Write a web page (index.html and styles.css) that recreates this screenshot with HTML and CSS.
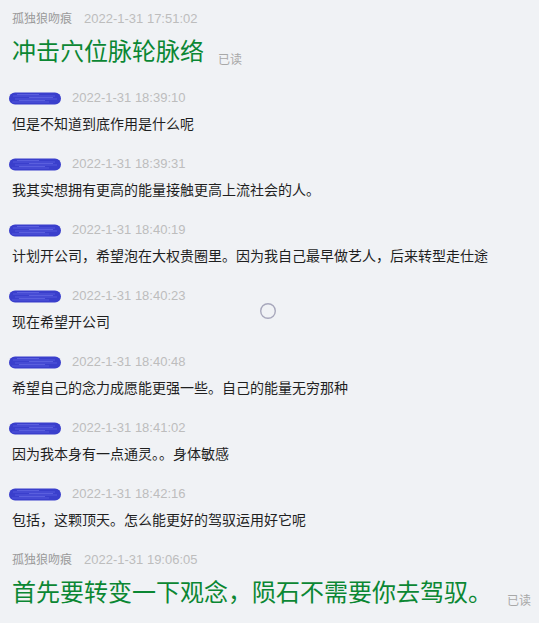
FILE: index.html
```html
<!DOCTYPE html>
<html lang="zh-CN">
<head>
<meta charset="utf-8">
<link rel="stylesheet" href="styles.css">
</head>
<body>
<div class="chat">
  <div class="msg">
    <div class="head"><span class="name">孤独狼吻痕</span><span class="time">2022-1-31 17:51:02</span></div>
    <div class="big-row"><span class="big">冲击穴位脉轮脉络</span><span class="read">已读</span></div>
  </div>

  <div class="msg">
    <div class="head"><svg class="blob" width="52" height="13" viewBox="0 0 52 13"><rect x="0" y="0.5" width="52" height="12" rx="6" fill="#3a3fcc"/><path d="M4 4 H46 M6 7 H48 M3 10 H40" stroke="#5a5fe0" stroke-width="1" opacity="0.8"/><path d="M8 2.5 H30 M20 5.5 H44 M10 8.5 H36" stroke="#7378ec" stroke-width="0.8" opacity="0.7"/></svg><span class="time">2022-1-31 18:39:10</span></div>
    <div class="text">但是不知道到底作用是什么呢</div>
  </div>

  <div class="msg">
    <div class="head"><svg class="blob" width="52" height="13" viewBox="0 0 52 13"><rect x="0" y="0.5" width="52" height="12" rx="6" fill="#3a3fcc"/><path d="M4 4 H46 M6 7 H48 M3 10 H40" stroke="#5a5fe0" stroke-width="1" opacity="0.8"/><path d="M8 2.5 H30 M20 5.5 H44 M10 8.5 H36" stroke="#7378ec" stroke-width="0.8" opacity="0.7"/></svg><span class="time">2022-1-31 18:39:31</span></div>
    <div class="text">我其实想拥有更高的能量接触更高上流社会的人。</div>
  </div>

  <div class="msg">
    <div class="head"><svg class="blob" width="52" height="13" viewBox="0 0 52 13"><rect x="0" y="0.5" width="52" height="12" rx="6" fill="#3a3fcc"/><path d="M4 4 H46 M6 7 H48 M3 10 H40" stroke="#5a5fe0" stroke-width="1" opacity="0.8"/><path d="M8 2.5 H30 M20 5.5 H44 M10 8.5 H36" stroke="#7378ec" stroke-width="0.8" opacity="0.7"/></svg><span class="time">2022-1-31 18:40:19</span></div>
    <div class="text">计划开公司，希望泡在大权贵圈里。因为我自己最早做艺人，后来转型走仕途</div>
  </div>

  <div class="msg">
    <div class="head"><svg class="blob" width="52" height="13" viewBox="0 0 52 13"><rect x="0" y="0.5" width="52" height="12" rx="6" fill="#3a3fcc"/><path d="M4 4 H46 M6 7 H48 M3 10 H40" stroke="#5a5fe0" stroke-width="1" opacity="0.8"/><path d="M8 2.5 H30 M20 5.5 H44 M10 8.5 H36" stroke="#7378ec" stroke-width="0.8" opacity="0.7"/></svg><span class="time">2022-1-31 18:40:23</span></div>
    <div class="text">现在希望开公司</div>
  </div>

  <div class="msg">
    <div class="head"><svg class="blob" width="52" height="13" viewBox="0 0 52 13"><rect x="0" y="0.5" width="52" height="12" rx="6" fill="#3a3fcc"/><path d="M4 4 H46 M6 7 H48 M3 10 H40" stroke="#5a5fe0" stroke-width="1" opacity="0.8"/><path d="M8 2.5 H30 M20 5.5 H44 M10 8.5 H36" stroke="#7378ec" stroke-width="0.8" opacity="0.7"/></svg><span class="time">2022-1-31 18:40:48</span></div>
    <div class="text">希望自己的念力成愿能更强一些。自己的能量无穷那种</div>
  </div>

  <div class="msg">
    <div class="head"><svg class="blob" width="52" height="13" viewBox="0 0 52 13"><rect x="0" y="0.5" width="52" height="12" rx="6" fill="#3a3fcc"/><path d="M4 4 H46 M6 7 H48 M3 10 H40" stroke="#5a5fe0" stroke-width="1" opacity="0.8"/><path d="M8 2.5 H30 M20 5.5 H44 M10 8.5 H36" stroke="#7378ec" stroke-width="0.8" opacity="0.7"/></svg><span class="time">2022-1-31 18:41:02</span></div>
    <div class="text">因为我本身有一点通灵。。身体敏感</div>
  </div>

  <div class="msg">
    <div class="head"><svg class="blob" width="52" height="13" viewBox="0 0 52 13"><rect x="0" y="0.5" width="52" height="12" rx="6" fill="#3a3fcc"/><path d="M4 4 H46 M6 7 H48 M3 10 H40" stroke="#5a5fe0" stroke-width="1" opacity="0.8"/><path d="M8 2.5 H30 M20 5.5 H44 M10 8.5 H36" stroke="#7378ec" stroke-width="0.8" opacity="0.7"/></svg><span class="time">2022-1-31 18:42:16</span></div>
    <div class="text">包括，这颗顶天。怎么能更好的驾驭运用好它呢</div>
  </div>

  <div class="msg">
    <div class="head"><span class="name">孤独狼吻痕</span><span class="time">2022-1-31 19:06:05</span></div>
    <div class="big-row last"><span class="big">首先要转变一下观念，陨石不需要你去驾驭。</span><span class="read">已读</span></div>
  </div>
</div>
<div class="spinner"><svg width="18" height="18" viewBox="0 0 18 18"><circle cx="9" cy="9" r="7.3" fill="none" stroke="#a8a8bc" stroke-width="1.4"/></svg></div>
</body>
</html>
```

FILE: styles.css
```css
html, body {
  margin: 0;
  padding: 0;
  background: #f0f2f5;
  height: 100%;
  overflow: hidden;
}
body {
  font-family: "Liberation Sans", "Noto Sans CJK SC", sans-serif;
}
.chat {
  display: flex;
  flex-direction: column;
  gap: 20px;
  padding: 9px 0 0 12px;
}
.msg {
  display: flex;
  flex-direction: column;
  gap: 6px;
}
.head {
  display: flex;
  align-items: center;
  height: 20px;
  gap: 12px;
}
.name {
  font-size: 12px;
  color: #9a9a9a;
  line-height: 20px;
}
.time {
  font-size: 13px;
  color: #bdbdbd;
  line-height: 20px;
}
.blob {
  margin-left: -3px;
  margin-right: -1px;
  display: block;
}
.text {
  font-size: 14px;
  line-height: 20px;
  color: #1f1f1f;
}
.big-row {
  display: flex;
  align-items: flex-end;
  margin-top: 1px;
}
.big {
  font-size: 24px;
  line-height: 32px;
  color: #0b8733;
}
.read {
  font-size: 12px;
  line-height: 20px;
  color: #a8a8a8;
  margin-left: 14px;
  margin-bottom: -2px;
}
.last .read {
  margin-left: 15px;
}
.spinner {
  position: absolute;
  left: 259px;
  top: 302px;
  width: 18px;
  height: 18px;
}
.spinner svg { display: block; }
```
